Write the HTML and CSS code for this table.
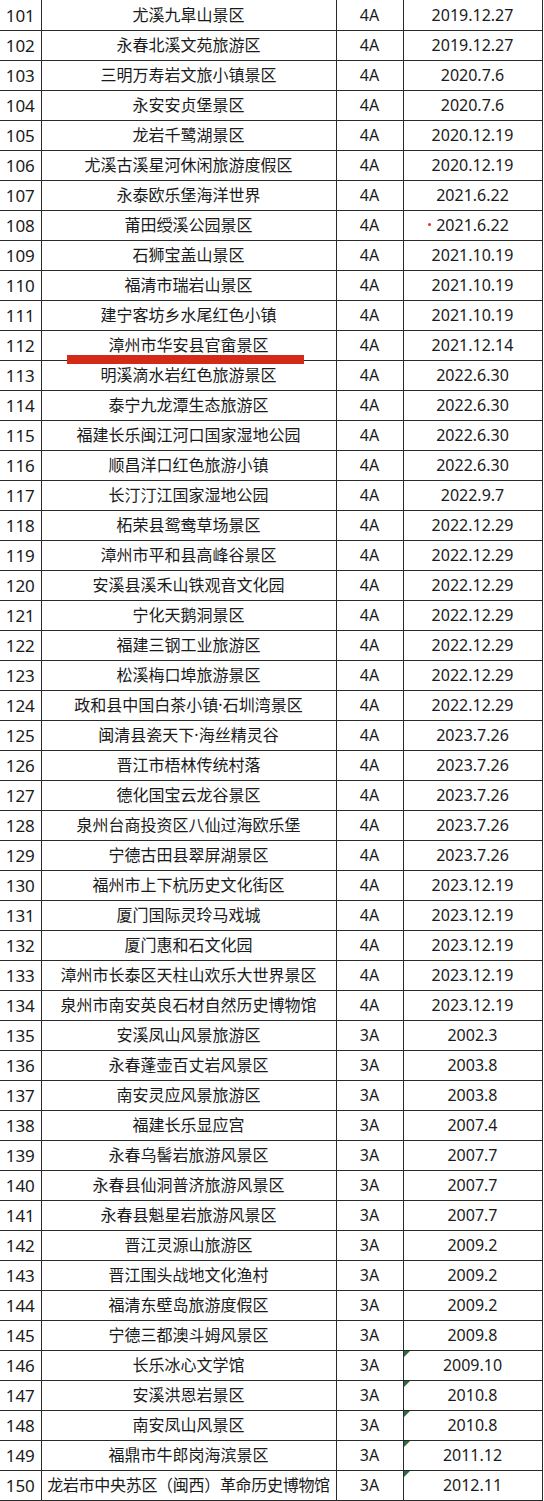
FILE: index.html
```html
<!DOCTYPE html>
<html lang="zh-CN">
<head>
<meta charset="utf-8">
<title>景区名录</title>
<link rel="stylesheet" href="styles.css">
</head>
<body>
<table class="list">
<colgroup><col class="c-no"><col class="c-name"><col class="c-lv"><col class="c-date"></colgroup>
<tbody>
<tr><td>101</td><td>尤溪九皐山景区</td><td>4A</td><td>2019.12.27</td></tr>
<tr><td>102</td><td>永春北溪文苑旅游区</td><td>4A</td><td>2019.12.27</td></tr>
<tr><td>103</td><td>三明万寿岩文旅小镇景区</td><td>4A</td><td>2020.7.6</td></tr>
<tr><td>104</td><td>永安安贞堡景区</td><td>4A</td><td>2020.7.6</td></tr>
<tr><td>105</td><td>龙岩千鹭湖景区</td><td>4A</td><td>2020.12.19</td></tr>
<tr><td>106</td><td>尤溪古溪星河休闲旅游度假区</td><td>4A</td><td>2020.12.19</td></tr>
<tr><td>107</td><td>永泰欧乐堡海洋世界</td><td>4A</td><td>2021.6.22</td></tr>
<tr><td>108</td><td>莆田绶溪公园景区</td><td>4A</td><td class="dot">2021.6.22</td></tr>
<tr><td>109</td><td>石狮宝盖山景区</td><td>4A</td><td>2021.10.19</td></tr>
<tr><td>110</td><td>福清市瑞岩山景区</td><td>4A</td><td>2021.10.19</td></tr>
<tr><td>111</td><td>建宁客坊乡水尾红色小镇</td><td>4A</td><td>2021.10.19</td></tr>
<tr><td>112</td><td class="marked">漳州市华安县官畲景区</td><td>4A</td><td>2021.12.14</td></tr>
<tr><td>113</td><td>明溪滴水岩红色旅游景区</td><td>4A</td><td>2022.6.30</td></tr>
<tr><td>114</td><td>泰宁九龙潭生态旅游区</td><td>4A</td><td>2022.6.30</td></tr>
<tr><td>115</td><td>福建长乐闽江河口国家湿地公园</td><td>4A</td><td>2022.6.30</td></tr>
<tr><td>116</td><td>顺昌洋口红色旅游小镇</td><td>4A</td><td>2022.6.30</td></tr>
<tr><td>117</td><td>长汀汀江国家湿地公园</td><td>4A</td><td>2022.9.7</td></tr>
<tr><td>118</td><td>柘荣县鸳鸯草场景区</td><td>4A</td><td>2022.12.29</td></tr>
<tr><td>119</td><td>漳州市平和县高峰谷景区</td><td>4A</td><td>2022.12.29</td></tr>
<tr><td>120</td><td>安溪县溪禾山铁观音文化园</td><td>4A</td><td>2022.12.29</td></tr>
<tr><td>121</td><td>宁化天鹅洞景区</td><td>4A</td><td>2022.12.29</td></tr>
<tr><td>122</td><td>福建三钢工业旅游区</td><td>4A</td><td>2022.12.29</td></tr>
<tr><td>123</td><td>松溪梅口埠旅游景区</td><td>4A</td><td>2022.12.29</td></tr>
<tr><td>124</td><td>政和县中国白茶小镇·石圳湾景区</td><td>4A</td><td>2022.12.29</td></tr>
<tr><td>125</td><td>闽清县瓷天下·海丝精灵谷</td><td>4A</td><td>2023.7.26</td></tr>
<tr><td>126</td><td>晋江市梧林传统村落</td><td>4A</td><td>2023.7.26</td></tr>
<tr><td>127</td><td>德化国宝云龙谷景区</td><td>4A</td><td>2023.7.26</td></tr>
<tr><td>128</td><td>泉州台商投资区八仙过海欧乐堡</td><td>4A</td><td>2023.7.26</td></tr>
<tr><td>129</td><td>宁德古田县翠屏湖景区</td><td>4A</td><td>2023.7.26</td></tr>
<tr><td>130</td><td>福州市上下杭历史文化街区</td><td>4A</td><td>2023.12.19</td></tr>
<tr><td>131</td><td>厦门国际灵玲马戏城</td><td>4A</td><td>2023.12.19</td></tr>
<tr><td>132</td><td>厦门惠和石文化园</td><td>4A</td><td>2023.12.19</td></tr>
<tr><td>133</td><td>漳州市长泰区天柱山欢乐大世界景区</td><td>4A</td><td>2023.12.19</td></tr>
<tr><td>134</td><td>泉州市南安英良石材自然历史博物馆</td><td>4A</td><td>2023.12.19</td></tr>
<tr><td>135</td><td>安溪凤山风景旅游区</td><td>3A</td><td>2002.3</td></tr>
<tr><td>136</td><td>永春蓬壶百丈岩风景区</td><td>3A</td><td>2003.8</td></tr>
<tr><td>137</td><td>南安灵应风景旅游区</td><td>3A</td><td>2003.8</td></tr>
<tr><td>138</td><td>福建长乐显应宫</td><td>3A</td><td>2007.4</td></tr>
<tr><td>139</td><td>永春乌髻岩旅游风景区</td><td>3A</td><td>2007.7</td></tr>
<tr><td>140</td><td>永春县仙洞普济旅游风景区</td><td>3A</td><td>2007.7</td></tr>
<tr><td>141</td><td>永春县魁星岩旅游风景区</td><td>3A</td><td>2007.7</td></tr>
<tr><td>142</td><td>晋江灵源山旅游区</td><td>3A</td><td>2009.2</td></tr>
<tr><td>143</td><td>晋江围头战地文化渔村</td><td>3A</td><td>2009.2</td></tr>
<tr><td>144</td><td>福清东壁岛旅游度假区</td><td>3A</td><td>2009.2</td></tr>
<tr><td>145</td><td>宁德三都澳斗姆风景区</td><td>3A</td><td>2009.8</td></tr>
<tr><td>146</td><td>长乐冰心文学馆</td><td>3A</td><td class="flag">2009.10</td></tr>
<tr><td>147</td><td>安溪洪恩岩景区</td><td>3A</td><td class="flag">2010.8</td></tr>
<tr><td>148</td><td>南安凤山风景区</td><td>3A</td><td class="flag">2010.8</td></tr>
<tr><td>149</td><td>福鼎市牛郎岗海滨景区</td><td>3A</td><td class="flag">2011.12</td></tr>
<tr><td>150</td><td class="wide">龙岩市中央苏区（闽西）革命历史博物馆</td><td>3A</td><td class="flag">2012.11</td></tr>
</tbody>
</table>
</body>
</html>
```
FILE: styles.css
```css
html, body {
  margin: 0;
  padding: 0;
  background: #fff;
}

.list {
  border-collapse: collapse;
  table-layout: fixed;
  width: 542px;
  font-family: "Noto Sans", "Noto Sans CJK SC", sans-serif;
  font-size: 16px;
  color: #1a1a1a;
}

.c-no { width: 41px; }
.c-name { width: 295px; }
.c-lv { width: 67px; }
.c-date { width: 139px; }

.list td {
  height: 29px;
  padding: 0;
  text-align: center;
  vertical-align: middle;
  border-right: 1px solid #2a2a2a;
  border-bottom: 1px solid #2a2a2a;
  white-space: nowrap;
  line-height: 29px;
  position: relative;
}

.list tr:first-child td {
  height: 30px;
}

.list td:first-child {
  font-size: 17px;
}

.list td.wide {
  letter-spacing: -0.3px;
}

.list td.marked::after {
  content: "";
  position: absolute;
  left: 25px;
  top: 24px;
  width: 237px;
  height: 9px;
  background: #d32b18;
}

.list td.dot::before {
  content: "";
  position: absolute;
  left: 24px;
  top: 12px;
  width: 3px;
  height: 3px;
  border-radius: 50%;
  background: #e0312a;
}

.list td.flag::before {
  content: "";
  position: absolute;
  left: 0;
  top: 0;
  width: 0;
  height: 0;
  border-top: 6px solid #2f6a3c;
  border-right: 6px solid transparent;
}
```
